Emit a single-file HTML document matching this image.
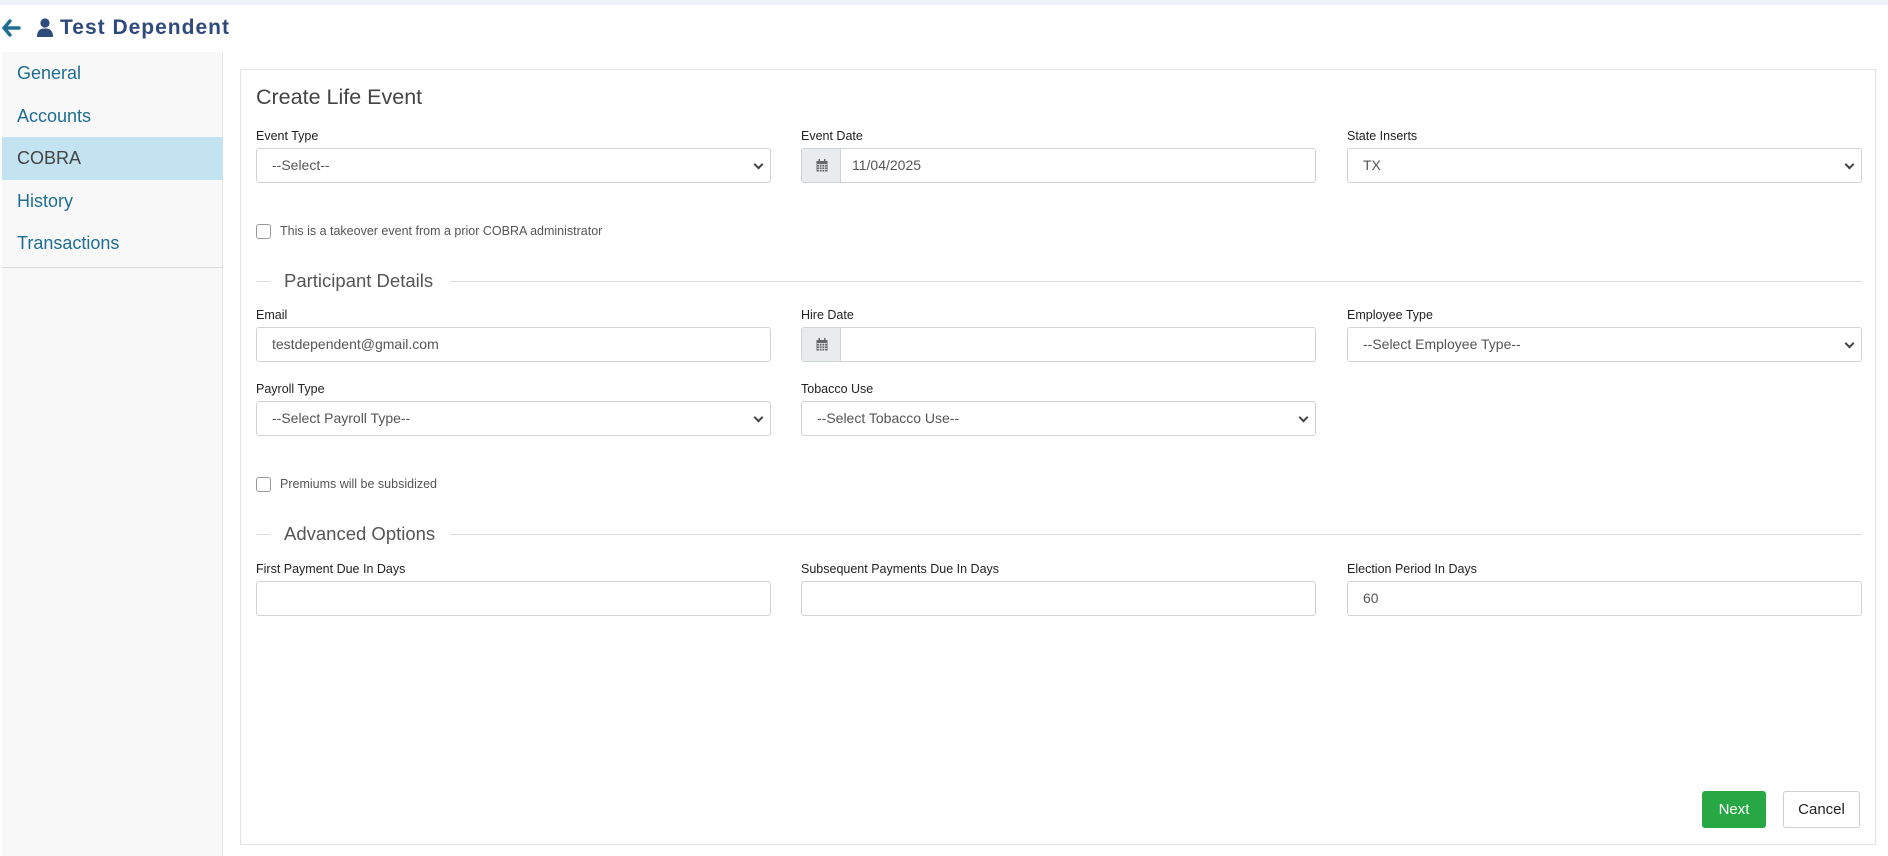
<!DOCTYPE html>
<html><head><meta charset="utf-8"><style>
*{box-sizing:border-box;margin:0;padding:0}
body{width:1888px;height:856px;background:#fff;font-family:"Liberation Sans",Arial,sans-serif;position:relative;overflow:hidden;color:#212529}
.a{position:absolute}
.top{left:0;top:0;width:1888px;height:5px;background:#eef1f8}
.hdr{left:0;top:12px;height:32px;display:flex;align-items:center;color:#2f4a7c;font-weight:bold;font-size:21px;letter-spacing:1px}
.side{left:2px;top:52px;width:221px;height:804px;background:#f8f8f8;border-right:1px solid #e6e6e6}
.side .it{position:absolute;left:15px;font-size:18px;color:#1f6d93}
.cob{position:absolute;left:0;top:85px;width:221px;height:43px;background:#c2e3ef}
.panel{left:240px;top:69px;width:1636px;height:776px;border:1px solid #e3e3e3}
.lbl{font-size:12.5px;color:#222}
.inp{height:35px;border:1px solid #cfd3d7;border-radius:3px;background:#fff;font-size:14px;color:#555;padding-left:15px;line-height:33px}
.sel::after{content:"";position:absolute;right:8px;top:12px;width:5px;height:5px;border-right:2px solid #444;border-bottom:2px solid #444;transform:rotate(45deg)}
.cb{width:15px;height:15px;border:1px solid #999;border-radius:3px;background:#fff}
.cbt{font-size:12.5px;color:#555}
.leg{font-size:18.5px;color:#555}
.ln{height:1px;background:#dcdcdc}
.addon{position:absolute;left:0;top:0;width:39px;height:33px;background:#e9ecef;border-right:1px solid #cfd3d7}
</style></head><body>
<div class="a top"></div>
<div class="a hdr">
<svg width="20" height="20" viewBox="0 0 20 20" style="margin-left:1px"><path d="M9 3 L3 10 L9 17 M3 10 H18" stroke="#1f6d93" stroke-width="3.4" fill="none" stroke-linecap="round" stroke-linejoin="round"/></svg>
<svg width="18" height="20" viewBox="0 0 18 20" style="margin-left:15px;margin-right:6px"><circle cx="9" cy="5" r="4.6" fill="#2f4a7c"/><path d="M1 19 Q1 10 9 10.5 Q17 10 17 19 Z" fill="#2f4a7c"/></svg>
<span>Test Dependent</span></div>
<div class="a side">
<div class="cob"></div>
<div class="it" style="top:11px">General</div>
<div class="it" style="top:54px">Accounts</div>
<div class="it" style="top:96px;color:#444">COBRA</div>
<div class="it" style="top:139px">History</div>
<div class="it" style="top:181px">Transactions</div>
<div style="position:absolute;left:0;top:215px;width:221px;height:1px;background:#dadada"></div>
</div>
<div class="a panel"></div>
<div class="a" style="left:256px;top:85px;font-size:21.5px;color:#444">Create Life Event</div>

<div class="a lbl" style="left:256px;top:129px">Event Type</div>
<div class="a inp sel" style="left:256px;top:148px;width:515px">--Select--</div>
<div class="a lbl" style="left:801px;top:129px">Event Date</div>
<div class="a inp" style="left:801px;top:148px;width:515px;padding-left:50px"><div class="addon"><svg width="12" height="13" viewBox="0 0 12 13" style="position:absolute;left:14px;top:10px"><rect x="0.5" y="2" width="11" height="10.5" fill="#666"/><rect x="2.5" y="0" width="1.5" height="3" fill="#666"/><rect x="8" y="0" width="1.5" height="3" fill="#666"/><path d="M1 5.5H11M1 8H11M1 10.5H11M3.3 5V12.5M6 5V12.5M8.7 5V12.5" stroke="#e9ecef" stroke-width="0.8"/></svg></div>11/04/2025</div>
<div class="a lbl" style="left:1347px;top:129px">State Inserts</div>
<div class="a inp sel" style="left:1347px;top:148px;width:515px">TX</div>

<div class="a cb" style="left:256px;top:224px"></div>
<div class="a cbt" style="left:280px;top:224px">This is a takeover event from a prior COBRA administrator</div>

<div class="a ln" style="left:256px;top:281px;width:15px"></div>
<div class="a leg" style="left:284px;top:270px">Participant Details</div>
<div class="a ln" style="left:450px;top:281px;width:1412px"></div>

<div class="a lbl" style="left:256px;top:308px">Email</div>
<div class="a inp" style="left:256px;top:327px;width:515px">testdependent@gmail.com</div>
<div class="a lbl" style="left:801px;top:308px">Hire Date</div>
<div class="a inp" style="left:801px;top:327px;width:515px"><div class="addon"><svg width="12" height="13" viewBox="0 0 12 13" style="position:absolute;left:14px;top:10px"><rect x="0.5" y="2" width="11" height="10.5" fill="#666"/><rect x="2.5" y="0" width="1.5" height="3" fill="#666"/><rect x="8" y="0" width="1.5" height="3" fill="#666"/><path d="M1 5.5H11M1 8H11M1 10.5H11M3.3 5V12.5M6 5V12.5M8.7 5V12.5" stroke="#e9ecef" stroke-width="0.8"/></svg></div></div>
<div class="a lbl" style="left:1347px;top:308px">Employee Type</div>
<div class="a inp sel" style="left:1347px;top:327px;width:515px">--Select Employee Type--</div>

<div class="a lbl" style="left:256px;top:382px">Payroll Type</div>
<div class="a inp sel" style="left:256px;top:401px;width:515px">--Select Payroll Type--</div>
<div class="a lbl" style="left:801px;top:382px">Tobacco Use</div>
<div class="a inp sel" style="left:801px;top:401px;width:515px">--Select Tobacco Use--</div>

<div class="a cb" style="left:256px;top:477px"></div>
<div class="a cbt" style="left:280px;top:477px">Premiums will be subsidized</div>

<div class="a ln" style="left:256px;top:534px;width:15px"></div>
<div class="a leg" style="left:284px;top:523px">Advanced Options</div>
<div class="a ln" style="left:450px;top:534px;width:1412px"></div>

<div class="a lbl" style="left:256px;top:562px">First Payment Due In Days</div>
<div class="a inp" style="left:256px;top:581px;width:515px"></div>
<div class="a lbl" style="left:801px;top:562px">Subsequent Payments Due In Days</div>
<div class="a inp" style="left:801px;top:581px;width:515px"></div>
<div class="a lbl" style="left:1347px;top:562px">Election Period In Days</div>
<div class="a inp" style="left:1347px;top:581px;width:515px">60</div>

<div class="a" style="left:1702px;top:791px;width:64px;height:37px;background:#28a745;border-radius:3px;color:#fff;font-size:15px;text-align:center;line-height:37px">Next</div>
<div class="a" style="left:1783px;top:791px;width:77px;height:37px;border:1px solid #cfcfcf;border-radius:3px;color:#222;font-size:15px;text-align:center;line-height:35px">Cancel</div>
</body></html>
